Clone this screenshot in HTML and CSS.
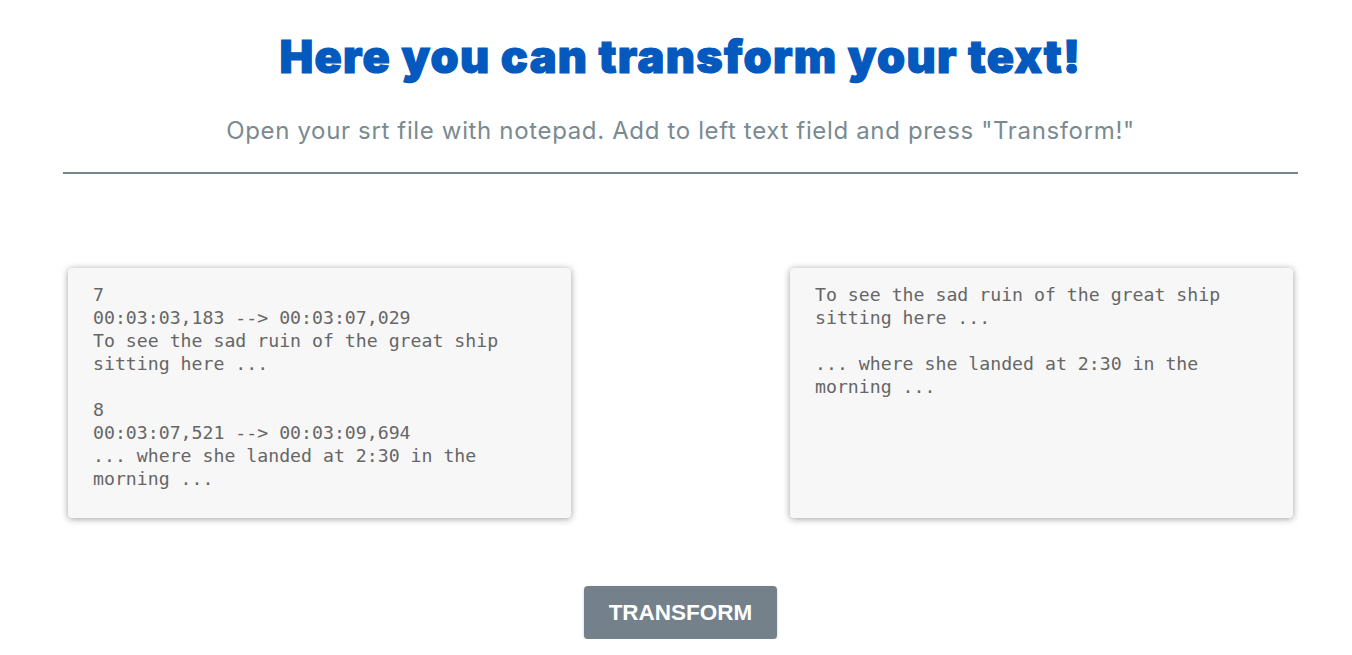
FILE: index.html
```html
<!DOCTYPE html>
<html>
<head>
<meta charset="utf-8">
<link rel="stylesheet" href="styles.css">
</head>
<body>
<div class="page">
  <h1 class="title">Here you can transform your text!</h1>
  <p class="subtitle">Open your srt file with notepad. Add to left text field and press "Transform!"</p>
  <hr class="rule">
  <div class="fields">
    <textarea class="field">7
00:03:03,183 --> 00:03:07,029
To see the sad ruin of the great ship
sitting here ...

8
00:03:07,521 --> 00:03:09,694
... where she landed at 2:30 in the
morning ...</textarea>
    <textarea class="field">To see the sad ruin of the great ship
sitting here ...

... where she landed at 2:30 in the
morning ...</textarea>
  </div>
  <div class="actions">
    <button class="btn">TRANSFORM</button>
  </div>
</div>
</body>
</html>
```

FILE: styles.css
```css
html, body {
  margin: 0;
  padding: 0;
  background: #ffffff;
}
.page {
  padding: 0 54px 0 63px;
}
.title {
  margin: 0;
  padding-top: 30px;
  text-align: center;
  font-family: "Inter", "Lato", sans-serif;
  font-weight: 900;
  font-size: 45px;
  line-height: 54px;
  letter-spacing: 1.3px;
  color: #0359bd;
  -webkit-text-stroke: 1.2px #0359bd;
}
.subtitle {
  margin: 0;
  padding-top: 33px;
  text-align: center;
  font-family: "Inter", "Open Sans", sans-serif;
  font-weight: 400;
  font-size: 24px;
  line-height: 28px;
  letter-spacing: 0.65px;
  color: #7a8a91;
}
.rule {
  margin: 27px 0 0 0;
  border: 0;
  height: 2px;
  background: #78868c;
}
.fields {
  display: flex;
  justify-content: space-between;
  padding: 94px 5px 0 5px;
}
.field {
  box-sizing: border-box;
  width: 503px;
  height: 250px;
  border: none;
  border-radius: 4px;
  background: #f7f7f7;
  box-shadow: 0 1px 7px rgba(0, 0, 0, 0.38);
  padding: 15px 25px 15px 25px;
  font-family: "DejaVu Sans Mono", monospace;
  font-size: 18.2px;
  line-height: 23px;
  color: #666666;
  resize: none;
  outline: none;
  overflow: hidden;
}
.actions {
  display: flex;
  justify-content: center;
  padding-top: 68px;
}
.btn {
  width: 193px;
  height: 53px;
  border: none;
  border-radius: 4px;
  background: #75818a;
  color: #ffffff;
  font-family: "Liberation Sans", Arial, sans-serif;
  font-weight: 700;
  font-size: 22.5px;
  box-shadow: 0 1px 3px rgba(0,0,0,0.2);
}
```
